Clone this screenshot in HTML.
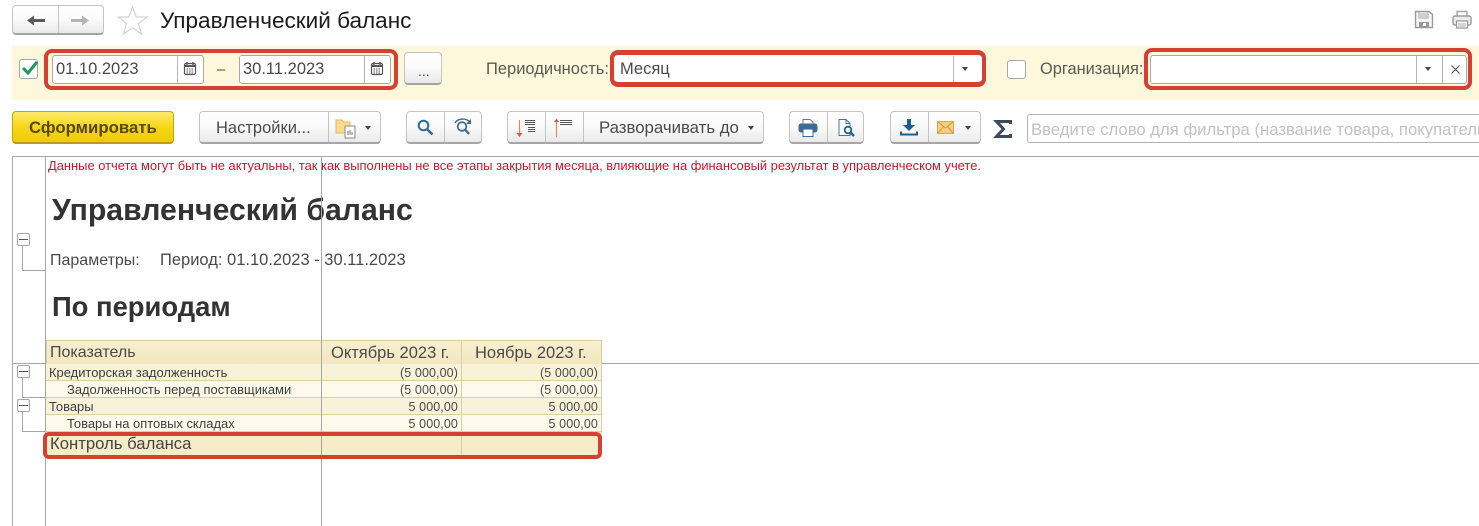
<!DOCTYPE html>
<html lang="ru"><head><meta charset="utf-8"><style>
html,body{margin:0;padding:0;width:1479px;height:526px;overflow:hidden;background:#fff}
body{font-family:"Liberation Sans",sans-serif;color:#4a4a4a;position:relative}
.a{position:absolute;box-sizing:border-box}
.t{position:absolute;white-space:nowrap;line-height:1}
.btn{position:absolute;box-sizing:border-box;border:1px solid #c4c4c4;border-bottom:2px solid #a5a5a5;border-radius:4px;background:linear-gradient(#fff 0%,#fafafa 50%,#e9e9e9 100%)}
.dv{position:absolute;width:1px;background:#c4c4c4}
.f{position:absolute;box-sizing:border-box;background:#fff;border:1px solid #a9a9a9;border-radius:3px}
.red{position:absolute;box-sizing:border-box;border:4px solid #d63f33;border-radius:7px}
.ln{position:absolute;background:#a6a6a6}
.tri{position:absolute;width:0;height:0;border-left:3.5px solid transparent;border-right:3.5px solid transparent;border-top:4px solid #444}
.r{position:absolute;left:46px;width:556px;box-sizing:border-box;border-bottom:1px solid #d9cfa2}
.m{position:absolute;box-sizing:border-box;width:13px;height:13px;left:17px;background:#fff;border:1px solid #a6a6a6;border-radius:2px}
.m:after{content:"";position:absolute;left:1px;right:1px;top:5px;height:1px;background:#555}
svg{position:absolute;overflow:visible}
</style></head><body>

<!-- nav -->
<div class="btn" style="left:12px;top:5px;width:92px;height:30px"></div>
<div class="dv" style="left:58px;top:6px;height:27px"></div>
<svg style="left:27px;top:14px" width="18" height="13"><path d="M0 6.500L7 1.500V5H18V8H7V11.500Z" fill="#5a5a5a"/></svg>
<svg style="left:71px;top:14px" width="18" height="13"><path d="M18 6.500L11 1.500V5H0V8H11V11.500Z" fill="#b5b5b5"/></svg>
<svg style="left:118px;top:6px" width="30" height="29"><path d="M14.500 1L18.200 11H29L20.500 17.600L23.600 28L14.500 21.800L5.400 28L8.500 17.600L0.500 11H10.800Z" fill="#fff" stroke="#d2d2d2" stroke-width="1.200"/></svg>
<div class="t" style="left:160px;top:10px;font-size:22.550px;color:#1c1c1c">Управленческий баланс</div>
<svg style="left:1414px;top:10px" width="20" height="19"><path d="M1.500 1.500H15L18.500 4.500V17.500H1.500Z" fill="#f4f4f4" stroke="#9a9a9a" stroke-width="1.400"/><path d="M5 2V8H14V2M6 4H13M6 6H13" fill="none" stroke="#aaa"/><rect x="5" y="12" width="10" height="5" fill="#999"/><rect x="9" y="13" width="3" height="3" fill="#fff"/></svg>
<svg style="left:1452px;top:10px" width="20" height="19"><path d="M5 6V1.500H15V6" fill="none" stroke="#a5a5a5" stroke-width="1.400"/><rect x="1" y="6" width="18" height="9" rx="2" fill="#ececec" stroke="#9a9a9a" stroke-width="1.400"/><rect x="4.500" y="11" width="11" height="7" fill="#fff" stroke="#9a9a9a" stroke-width="1.300"/><path d="M6 14H14M6 16H14" stroke="#aaa"/></svg>

<!-- filter bar -->
<div class="a" style="left:12px;top:46px;width:1467px;height:54px;background:#fdf8dc"></div>
<div class="a" style="left:19px;top:59px;width:19px;height:20px;background:#fff;border:1px solid #a8a8a8;border-radius:3px"></div>
<svg style="left:21px;top:60px" width="18" height="16"><path d="M2 8L7 13L16 2" fill="none" stroke="#1f9a5b" stroke-width="3"/></svg>

<div class="f" style="left:52px;top:55px;width:152px;height:29px"></div>
<div class="dv" style="left:177px;top:56px;height:27px;background:#b5b5b5"></div>
<div class="t" style="left:56px;top:61px;font-size:16.500px">01.10.2023</div>
<svg style="left:184px;top:62px" width="13" height="14"><rect x="0.500" y="1.500" width="11" height="11" rx="1.500" fill="#fff" stroke="#555" stroke-width="1.200"/><path d="M0.500 3H11.500V5H0.500Z" fill="#555"/><path d="M3 0V3M9 0V3" stroke="#555" stroke-width="1.300"/><path d="M2.500 7H10M2.500 9H10M2.500 11H10" stroke="#555" stroke-dasharray="1.500 1" fill="none"/></svg>
<div class="t" style="left:217px;top:62px;font-size:15px">–</div>
<div class="f" style="left:239px;top:55px;width:152px;height:29px"></div>
<div class="dv" style="left:364px;top:56px;height:27px;background:#b5b5b5"></div>
<div class="t" style="left:243px;top:61px;font-size:16.500px">30.11.2023</div>
<svg style="left:371px;top:62px" width="13" height="14"><rect x="0.500" y="1.500" width="11" height="11" rx="1.500" fill="#fff" stroke="#555" stroke-width="1.200"/><path d="M0.500 3H11.500V5H0.500Z" fill="#555"/><path d="M3 0V3M9 0V3" stroke="#555" stroke-width="1.300"/><path d="M2.500 7H10M2.500 9H10M2.500 11H10" stroke="#555" stroke-dasharray="1.500 1" fill="none"/></svg>
<div class="red" style="left:44px;top:49px;width:354px;height:41px;border-radius:8px"></div>
<div class="btn" style="left:404px;top:52px;width:38px;height:33px"></div>
<div class="t" style="left:418px;top:64px;font-size:14px">...</div>

<div class="t" style="left:486px;top:61px;font-size:16.500px;color:#5a5a50">Периодичность:</div>
<div class="f" style="left:615px;top:55px;width:367px;height:28px;border:0"></div>
<div class="dv" style="left:953px;top:56px;height:26px;background:#b5b5b5"></div>
<div class="t" style="left:620px;top:61px;font-size:16.500px">Месяц</div>
<div class="tri" style="left:962px;top:67px"></div>
<div class="red" style="left:610px;top:50px;width:376px;height:37px;border-width:5px 4px;border-radius:8px"></div>

<div class="a" style="left:1007px;top:60px;width:19px;height:19px;background:#fff;border:1px solid #a8a8a8;border-radius:3px"></div>
<div class="t" style="left:1040px;top:61px;font-size:16.400px;color:#5a5a50">Организация:</div>
<div class="f" style="left:1150px;top:55px;width:317px;height:29px"></div>
<div class="dv" style="left:1416px;top:56px;height:27px;background:#b5b5b5"></div>
<div class="dv" style="left:1442px;top:56px;height:27px;background:#b5b5b5"></div>
<div class="tri" style="left:1425px;top:67px"></div>
<svg style="left:1451px;top:65px" width="9" height="9"><path d="M0.500 0.500L8.500 8.500M8.500 0.500L0.500 8.500" stroke="#555" stroke-width="1.100"/></svg>
<div class="red" style="left:1144px;top:48px;width:328px;height:42px;border-radius:8px"></div>

<!-- toolbar -->
<div class="a" style="left:12px;top:111px;width:162px;height:33px;background:linear-gradient(#fdeb6a,#f6d718 50%,#eecb05);border:1px solid #c8a800;border-bottom:2px solid #b99d10;border-radius:4px"></div>
<div class="t" style="left:29px;top:120px;font-size:16.800px;font-weight:bold;color:#57480f">Сформировать</div>

<div class="btn" style="left:199px;top:111px;width:182px;height:33px"></div>
<div class="dv" style="left:328px;top:112px;height:30px"></div>
<div class="t" style="left:216px;top:120px;font-size:16.500px">Настройки...</div>
<svg style="left:335px;top:117px" width="22" height="22"><path d="M1 3H7L9 5H15V16H1Z" fill="#f9dc92" stroke="#e3b760"/><rect x="10" y="9" width="10" height="12" fill="#fff" stroke="#888"/><path d="M13 18V14M15 18V13M17 18V15" stroke="#777"/></svg>
<div class="tri" style="left:365px;top:126px"></div>

<div class="btn" style="left:406px;top:111px;width:76px;height:33px"></div>
<div class="dv" style="left:444px;top:112px;height:30px"></div>
<svg style="left:417px;top:119px" width="17" height="17"><circle cx="6.500" cy="6.500" r="4.800" fill="none" stroke="#2d6c9c" stroke-width="2"/><path d="M10 10L15.500 15.500" stroke="#2d6c9c" stroke-width="2.600"/></svg>
<svg style="left:454px;top:117px" width="18" height="19"><path d="M1 6C4 1 12 1 16 5" fill="none" stroke="#3a6f93" stroke-width="1.400"/><path d="M17 2V7H12Z" fill="#3a6f93"/><circle cx="8" cy="9.500" r="4.300" fill="none" stroke="#3a6f93" stroke-width="1.800"/><path d="M11 12.500L15 17" stroke="#3a6f93" stroke-width="2.300"/></svg>

<div class="btn" style="left:507px;top:111px;width:257px;height:33px"></div>
<div class="dv" style="left:545px;top:112px;height:30px"></div>
<div class="dv" style="left:583px;top:112px;height:30px"></div>
<svg style="left:516px;top:119px" width="22" height="19"><path d="M3.500 1V15" stroke="#e38a63" stroke-width="1.200"/><path d="M0.500 14H6.500L3.500 18Z" fill="#d9593a"/><path d="M9 1.500H19M9 3.500H19M9 5.500H19M12 8.500H19M12 10.500H19M12 12.500H19" stroke="#555" stroke-width="1"/></svg>
<svg style="left:554px;top:118px" width="22" height="20"><path d="M2.500 3V19" stroke="#e38a63" stroke-width="1.200"/><path d="M0 4H5L2.500 0.500Z" fill="#d9593a"/><path d="M6 2.500H18M6 4.500H18M6 6.500H18" stroke="#555" stroke-width="1"/></svg>
<div class="t" style="left:599px;top:120px;font-size:16.800px">Разворачивать до</div>
<div class="tri" style="left:748px;top:126px"></div>

<div class="btn" style="left:789px;top:111px;width:75px;height:33px"></div>
<div class="dv" style="left:827px;top:112px;height:30px"></div>
<svg style="left:798px;top:119px" width="20" height="18"><path d="M5 5V0.500H12L15 3V5" fill="#fff" stroke="#777"/><rect x="1" y="5" width="18" height="8" rx="2" fill="#3e6b94" stroke="#3e6b94" stroke-width="1"/><rect x="5" y="10" width="10" height="7.500" fill="#fff" stroke="#3e6b94"/></svg>
<svg style="left:838px;top:119px" width="18" height="18"><path d="M1 .5H8L12 4.500V16.500H1Z" fill="#fff" stroke="#4a7396"/><path d="M8 .5V4.500H12" fill="none" stroke="#4a7396"/><circle cx="10" cy="11" r="3.300" fill="#fff" stroke="#1f5f8f" stroke-width="1.800"/><path d="M12.500 13.500L16 17" stroke="#1f5f8f" stroke-width="2.400"/></svg>

<div class="btn" style="left:890px;top:111px;width:91px;height:33px"></div>
<div class="dv" style="left:928px;top:112px;height:30px"></div>
<svg style="left:900px;top:119px" width="18" height="17"><path d="M7 0H11V6H15L9 12L3 6H7Z" fill="#1f5f8f"/><path d="M1 12.500V15.500H17V12.500" fill="none" stroke="#1f5f8f" stroke-width="2"/></svg>
<svg style="left:937px;top:121px" width="17" height="13"><rect x=".5" y=".5" width="16" height="12" fill="#f5cf7c" stroke="#dca94c"/><path d="M.5 .5L8.500 7L16.500 .5M.5 12.500L6.500 5.500M16.500 12.500L10.500 5.500" fill="none" stroke="#d29b3f"/></svg>
<div class="tri" style="left:965px;top:126px"></div>

<svg style="left:995px;top:120px" width="17" height="18"><path d="M15.500 4V1.500H1.500L8.500 9L1.500 16.500H15.500V14" fill="none" stroke="#3c4b59" stroke-width="3"/></svg>
<div class="a" style="left:1027px;top:114px;width:460px;height:29px;background:#fff;border:1px solid #b5b5b5;border-radius:3px"></div>
<div class="t" style="left:1031px;top:121px;font-size:16.700px;color:#c2c2c2;width:448px;overflow:hidden;line-height:17px">Введите слово для фильтра (название товара, покупатель, ...)</div>

<!-- report grid -->
<div class="ln" style="left:12px;top:156px;width:1467px;height:1px"></div>
<div class="ln" style="left:12px;top:156px;width:1px;height:370px"></div>
<div class="ln" style="left:45px;top:156px;width:1px;height:370px"></div>
<div class="ln" style="left:12px;top:363px;width:1467px;height:1px"></div>

<div class="t" style="left:48px;top:160px;font-size:12.920px;color:#d1142c">Данные отчета могут быть не актуальны, так как выполнены не все этапы закрытия месяца, влияющие на финансовый результат в управленческом учете.</div>
<div class="t" style="left:52px;top:196px;font-size:30.200px;font-weight:bold;color:#333">Управленческий баланс</div>
<div class="t" style="left:50px;top:253px;font-size:16px">Параметры:</div>
<div class="t" style="left:160px;top:252px;font-size:16.500px">Период: 01.10.2023 - 30.11.2023</div>
<div class="t" style="left:52px;top:293px;font-size:27.400px;font-weight:bold;color:#333">По периодам</div>

<div class="m" style="top:233px"></div>
<div class="ln" style="left:22px;top:246px;width:1px;height:24px"></div>
<div class="ln" style="left:22px;top:270px;width:24px;height:1px"></div>

<!-- table -->
<div class="r" style="top:340px;height:24px;background:linear-gradient(#f7efcf,#f3e7bf);border:1px solid #d9cfa2;border-bottom:0"></div>
<div class="t" style="left:50px;top:345px;font-size:16px">Показатель</div>
<div class="t" style="left:331px;top:345px;font-size:16.500px">Октябрь 2023 г.</div>
<div class="t" style="left:475px;top:345px;font-size:16.500px">Ноябрь 2023 г.</div>

<div class="r" style="top:364px;height:17px;background:#f8f2d8"></div>
<div class="t" style="left:49px;top:367px;font-size:12.950px;color:#3e3e3e">Кредиторская задолженность</div>
<div class="r" style="top:381px;height:17px;background:#fdfaec"></div>
<div class="t" style="left:67px;top:384px;font-size:12.950px;color:#3e3e3e">Задолженность перед поставщиками</div>
<div class="r" style="top:398px;height:17px;background:#f8f2d8"></div>
<div class="t" style="left:49px;top:401px;font-size:12.950px;color:#3e3e3e">Товары</div>
<div class="r" style="top:415px;height:17px;background:#fdfaec"></div>
<div class="t" style="left:67px;top:418px;font-size:12.950px;color:#3e3e3e">Товары на оптовых складах</div>
<div class="r" style="top:432px;height:24px;background:#f8ecc8;border:0"></div>
<div class="t" style="left:50px;top:436px;font-size:16.700px;color:#444">Контроль баланса</div>

<div class="t" style="right:1021px;top:367px;font-size:12.500px;letter-spacing:.1px">(5 000,00)</div>
<div class="t" style="right:1021px;top:384px;font-size:12.500px;letter-spacing:.1px">(5 000,00)</div>
<div class="t" style="right:1021px;top:401px;font-size:12.500px;letter-spacing:.1px">5 000,00</div>
<div class="t" style="right:1021px;top:418px;font-size:12.500px;letter-spacing:.1px">5 000,00</div>
<div class="t" style="right:881px;top:367px;font-size:12.500px;letter-spacing:.1px">(5 000,00)</div>
<div class="t" style="right:881px;top:384px;font-size:12.500px;letter-spacing:.1px">(5 000,00)</div>
<div class="t" style="right:881px;top:401px;font-size:12.500px;letter-spacing:.1px">5 000,00</div>
<div class="t" style="right:881px;top:418px;font-size:12.500px;letter-spacing:.1px">5 000,00</div>

<div class="a" style="left:461px;top:340px;width:1px;height:116px;background:#d9cfa2"></div>
<div class="a" style="left:601px;top:340px;width:1px;height:92px;background:#d9cfa2"></div>
<div class="ln" style="left:321px;top:156px;width:1px;height:370px"></div>

<div class="m" style="top:365px"></div>
<div class="ln" style="left:22px;top:378px;width:1px;height:20px"></div>
<div class="ln" style="left:22px;top:397px;width:24px;height:1px"></div>
<div class="m" style="top:399px"></div>
<div class="ln" style="left:22px;top:412px;width:1px;height:19px"></div>
<div class="ln" style="left:22px;top:431px;width:24px;height:1px"></div>

<div class="red" style="left:43px;top:432px;width:559px;height:27px;border-radius:6px"></div>
</body></html>
